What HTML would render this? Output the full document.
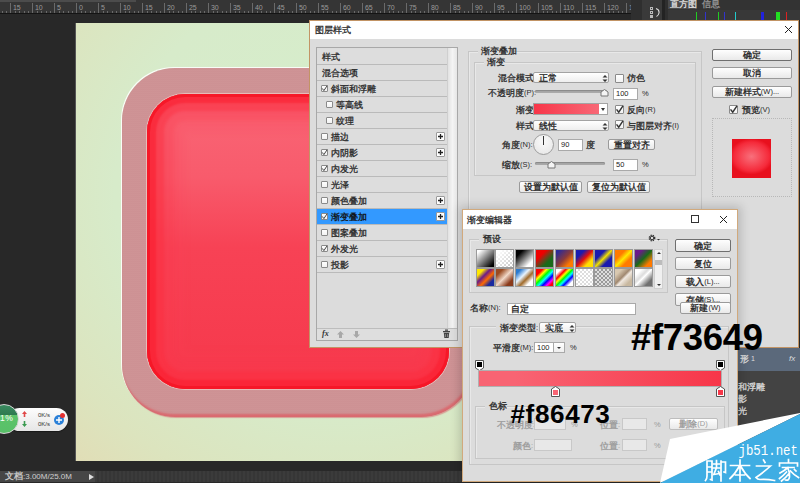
<!DOCTYPE html><html><head><meta charset="utf-8"><title>PS</title><style>
*{margin:0;padding:0;box-sizing:border-box}
html,body{width:800px;height:483px;overflow:hidden;background:#282828;font-family:"Liberation Sans",sans-serif;position:relative}
.a{position:absolute}
.t{position:absolute;font-size:7.5px;line-height:8px;color:#2a2a2a;white-space:nowrap}
.g{color:#9a9a9a}
.c{font-size:9.4px;line-height:8px;vertical-align:top;-webkit-text-stroke:0.3px currentColor}
.cb{position:absolute;width:7px;height:7px;background:linear-gradient(#fff,#f2f2f2);border:1px solid #8a8a8a;border-radius:1px}
.cb.s{width:6px;height:6px}
.ck{position:absolute;left:-1px;top:-1px;width:7px;height:7px}
.btn{position:absolute;border:1px solid #9a9a9a;border-radius:2px;background:linear-gradient(#fefefe,#e9e9e9);font-size:7.5px;line-height:8px;color:#222;white-space:nowrap;display:flex;align-items:center;justify-content:center}
.inp{position:absolute;background:#fff;border:1px solid #a9a9a9;font-size:7.5px;line-height:8px;color:#222;padding-left:2px;display:flex;align-items:center}
.dd{position:absolute;border:1px solid #a3a3a3;border-radius:2px;background:linear-gradient(#fff,#eeeeee);font-size:7.5px;line-height:8px;color:#222;padding-left:5px;display:flex;align-items:center}
.grp{position:absolute;border:1px solid #c6c6c6;box-shadow:inset 1px 1px 0 #e8e8e8}
.plus{position:absolute;width:9px;height:9px;border:1px solid #9a9a9a;background:#fff;border-radius:1px}
</style></head><body>
<div class="a" style="left:0;top:0;width:631px;height:14px;background:#353535;border-bottom:1px solid #141414"></div>
<div class="a" style="left:0;top:0;width:136px;height:2px;background:#4c4c4c"></div>
<div class="a" style="left:1.6px;top:11px;width:1px;height:2px;background:#6a6a6a"></div><div class="a" style="left:6.0px;top:11px;width:1px;height:2px;background:#6a6a6a"></div><div class="a" style="left:10.4px;top:3px;width:1px;height:10px;background:#6a6a6a"></div><div class="a" style="left:12.9px;top:4px;font-size:7px;line-height:8px;color:#9a9a9a">15</div><div class="a" style="left:14.8px;top:11px;width:1px;height:2px;background:#6a6a6a"></div><div class="a" style="left:19.2px;top:11px;width:1px;height:2px;background:#6a6a6a"></div><div class="a" style="left:23.6px;top:11px;width:1px;height:2px;background:#6a6a6a"></div><div class="a" style="left:28.0px;top:11px;width:1px;height:2px;background:#6a6a6a"></div><div class="a" style="left:32.4px;top:3px;width:1px;height:10px;background:#6a6a6a"></div><div class="a" style="left:34.9px;top:4px;font-size:7px;line-height:8px;color:#9a9a9a">10</div><div class="a" style="left:36.8px;top:11px;width:1px;height:2px;background:#6a6a6a"></div><div class="a" style="left:41.2px;top:11px;width:1px;height:2px;background:#6a6a6a"></div><div class="a" style="left:45.6px;top:11px;width:1px;height:2px;background:#6a6a6a"></div><div class="a" style="left:50.0px;top:11px;width:1px;height:2px;background:#6a6a6a"></div><div class="a" style="left:54.4px;top:3px;width:1px;height:10px;background:#6a6a6a"></div><div class="a" style="left:56.9px;top:4px;font-size:7px;line-height:8px;color:#9a9a9a">5</div><div class="a" style="left:58.8px;top:11px;width:1px;height:2px;background:#6a6a6a"></div><div class="a" style="left:63.2px;top:11px;width:1px;height:2px;background:#6a6a6a"></div><div class="a" style="left:67.6px;top:11px;width:1px;height:2px;background:#6a6a6a"></div><div class="a" style="left:72.0px;top:11px;width:1px;height:2px;background:#6a6a6a"></div><div class="a" style="left:76.4px;top:3px;width:1px;height:10px;background:#6a6a6a"></div><div class="a" style="left:78.9px;top:4px;font-size:7px;line-height:8px;color:#9a9a9a">0</div><div class="a" style="left:80.8px;top:11px;width:1px;height:2px;background:#6a6a6a"></div><div class="a" style="left:85.2px;top:11px;width:1px;height:2px;background:#6a6a6a"></div><div class="a" style="left:89.6px;top:11px;width:1px;height:2px;background:#6a6a6a"></div><div class="a" style="left:94.0px;top:11px;width:1px;height:2px;background:#6a6a6a"></div><div class="a" style="left:98.4px;top:3px;width:1px;height:10px;background:#6a6a6a"></div><div class="a" style="left:100.9px;top:4px;font-size:7px;line-height:8px;color:#9a9a9a">5</div><div class="a" style="left:102.8px;top:11px;width:1px;height:2px;background:#6a6a6a"></div><div class="a" style="left:107.2px;top:11px;width:1px;height:2px;background:#6a6a6a"></div><div class="a" style="left:111.6px;top:11px;width:1px;height:2px;background:#6a6a6a"></div><div class="a" style="left:116.0px;top:11px;width:1px;height:2px;background:#6a6a6a"></div><div class="a" style="left:120.4px;top:3px;width:1px;height:10px;background:#6a6a6a"></div><div class="a" style="left:122.9px;top:4px;font-size:7px;line-height:8px;color:#9a9a9a">10</div><div class="a" style="left:124.8px;top:11px;width:1px;height:2px;background:#6a6a6a"></div><div class="a" style="left:129.2px;top:11px;width:1px;height:2px;background:#6a6a6a"></div><div class="a" style="left:133.6px;top:11px;width:1px;height:2px;background:#6a6a6a"></div><div class="a" style="left:138.0px;top:11px;width:1px;height:2px;background:#6a6a6a"></div><div class="a" style="left:142.4px;top:3px;width:1px;height:10px;background:#6a6a6a"></div><div class="a" style="left:144.9px;top:4px;font-size:7px;line-height:8px;color:#9a9a9a">15</div><div class="a" style="left:146.8px;top:11px;width:1px;height:2px;background:#6a6a6a"></div><div class="a" style="left:151.2px;top:11px;width:1px;height:2px;background:#6a6a6a"></div><div class="a" style="left:155.6px;top:11px;width:1px;height:2px;background:#6a6a6a"></div><div class="a" style="left:160.0px;top:11px;width:1px;height:2px;background:#6a6a6a"></div><div class="a" style="left:164.4px;top:3px;width:1px;height:10px;background:#6a6a6a"></div><div class="a" style="left:166.9px;top:4px;font-size:7px;line-height:8px;color:#9a9a9a">20</div><div class="a" style="left:168.8px;top:11px;width:1px;height:2px;background:#6a6a6a"></div><div class="a" style="left:173.2px;top:11px;width:1px;height:2px;background:#6a6a6a"></div><div class="a" style="left:177.6px;top:11px;width:1px;height:2px;background:#6a6a6a"></div><div class="a" style="left:182.0px;top:11px;width:1px;height:2px;background:#6a6a6a"></div><div class="a" style="left:186.4px;top:3px;width:1px;height:10px;background:#6a6a6a"></div><div class="a" style="left:188.9px;top:4px;font-size:7px;line-height:8px;color:#9a9a9a">25</div><div class="a" style="left:190.8px;top:11px;width:1px;height:2px;background:#6a6a6a"></div><div class="a" style="left:195.2px;top:11px;width:1px;height:2px;background:#6a6a6a"></div><div class="a" style="left:199.6px;top:11px;width:1px;height:2px;background:#6a6a6a"></div><div class="a" style="left:204.0px;top:11px;width:1px;height:2px;background:#6a6a6a"></div><div class="a" style="left:208.4px;top:3px;width:1px;height:10px;background:#6a6a6a"></div><div class="a" style="left:210.9px;top:4px;font-size:7px;line-height:8px;color:#9a9a9a">30</div><div class="a" style="left:212.8px;top:11px;width:1px;height:2px;background:#6a6a6a"></div><div class="a" style="left:217.2px;top:11px;width:1px;height:2px;background:#6a6a6a"></div><div class="a" style="left:221.6px;top:11px;width:1px;height:2px;background:#6a6a6a"></div><div class="a" style="left:226.0px;top:11px;width:1px;height:2px;background:#6a6a6a"></div><div class="a" style="left:230.4px;top:3px;width:1px;height:10px;background:#6a6a6a"></div><div class="a" style="left:232.9px;top:4px;font-size:7px;line-height:8px;color:#9a9a9a">35</div><div class="a" style="left:234.8px;top:11px;width:1px;height:2px;background:#6a6a6a"></div><div class="a" style="left:239.2px;top:11px;width:1px;height:2px;background:#6a6a6a"></div><div class="a" style="left:243.6px;top:11px;width:1px;height:2px;background:#6a6a6a"></div><div class="a" style="left:248.0px;top:11px;width:1px;height:2px;background:#6a6a6a"></div><div class="a" style="left:252.4px;top:3px;width:1px;height:10px;background:#6a6a6a"></div><div class="a" style="left:254.9px;top:4px;font-size:7px;line-height:8px;color:#9a9a9a">40</div><div class="a" style="left:256.8px;top:11px;width:1px;height:2px;background:#6a6a6a"></div><div class="a" style="left:261.2px;top:11px;width:1px;height:2px;background:#6a6a6a"></div><div class="a" style="left:265.6px;top:11px;width:1px;height:2px;background:#6a6a6a"></div><div class="a" style="left:270.0px;top:11px;width:1px;height:2px;background:#6a6a6a"></div><div class="a" style="left:274.4px;top:3px;width:1px;height:10px;background:#6a6a6a"></div><div class="a" style="left:276.9px;top:4px;font-size:7px;line-height:8px;color:#9a9a9a">45</div><div class="a" style="left:278.8px;top:11px;width:1px;height:2px;background:#6a6a6a"></div><div class="a" style="left:283.2px;top:11px;width:1px;height:2px;background:#6a6a6a"></div><div class="a" style="left:287.6px;top:11px;width:1px;height:2px;background:#6a6a6a"></div><div class="a" style="left:292.0px;top:11px;width:1px;height:2px;background:#6a6a6a"></div><div class="a" style="left:296.4px;top:3px;width:1px;height:10px;background:#6a6a6a"></div><div class="a" style="left:298.9px;top:4px;font-size:7px;line-height:8px;color:#9a9a9a">50</div><div class="a" style="left:300.8px;top:11px;width:1px;height:2px;background:#6a6a6a"></div><div class="a" style="left:305.2px;top:11px;width:1px;height:2px;background:#6a6a6a"></div><div class="a" style="left:309.6px;top:11px;width:1px;height:2px;background:#6a6a6a"></div><div class="a" style="left:314.0px;top:11px;width:1px;height:2px;background:#6a6a6a"></div><div class="a" style="left:318.4px;top:3px;width:1px;height:10px;background:#6a6a6a"></div><div class="a" style="left:320.9px;top:4px;font-size:7px;line-height:8px;color:#9a9a9a">55</div><div class="a" style="left:322.8px;top:11px;width:1px;height:2px;background:#6a6a6a"></div><div class="a" style="left:327.2px;top:11px;width:1px;height:2px;background:#6a6a6a"></div><div class="a" style="left:331.6px;top:11px;width:1px;height:2px;background:#6a6a6a"></div><div class="a" style="left:336.0px;top:11px;width:1px;height:2px;background:#6a6a6a"></div><div class="a" style="left:340.4px;top:3px;width:1px;height:10px;background:#6a6a6a"></div><div class="a" style="left:342.9px;top:4px;font-size:7px;line-height:8px;color:#9a9a9a">60</div><div class="a" style="left:344.8px;top:11px;width:1px;height:2px;background:#6a6a6a"></div><div class="a" style="left:349.2px;top:11px;width:1px;height:2px;background:#6a6a6a"></div><div class="a" style="left:353.6px;top:11px;width:1px;height:2px;background:#6a6a6a"></div><div class="a" style="left:358.0px;top:11px;width:1px;height:2px;background:#6a6a6a"></div><div class="a" style="left:362.4px;top:3px;width:1px;height:10px;background:#6a6a6a"></div><div class="a" style="left:364.9px;top:4px;font-size:7px;line-height:8px;color:#9a9a9a">65</div><div class="a" style="left:366.8px;top:11px;width:1px;height:2px;background:#6a6a6a"></div><div class="a" style="left:371.2px;top:11px;width:1px;height:2px;background:#6a6a6a"></div><div class="a" style="left:375.6px;top:11px;width:1px;height:2px;background:#6a6a6a"></div><div class="a" style="left:380.0px;top:11px;width:1px;height:2px;background:#6a6a6a"></div><div class="a" style="left:384.4px;top:3px;width:1px;height:10px;background:#6a6a6a"></div><div class="a" style="left:386.9px;top:4px;font-size:7px;line-height:8px;color:#9a9a9a">70</div><div class="a" style="left:388.8px;top:11px;width:1px;height:2px;background:#6a6a6a"></div><div class="a" style="left:393.2px;top:11px;width:1px;height:2px;background:#6a6a6a"></div><div class="a" style="left:397.6px;top:11px;width:1px;height:2px;background:#6a6a6a"></div><div class="a" style="left:402.0px;top:11px;width:1px;height:2px;background:#6a6a6a"></div><div class="a" style="left:406.4px;top:3px;width:1px;height:10px;background:#6a6a6a"></div><div class="a" style="left:408.9px;top:4px;font-size:7px;line-height:8px;color:#9a9a9a">75</div><div class="a" style="left:410.8px;top:11px;width:1px;height:2px;background:#6a6a6a"></div><div class="a" style="left:415.2px;top:11px;width:1px;height:2px;background:#6a6a6a"></div><div class="a" style="left:419.6px;top:11px;width:1px;height:2px;background:#6a6a6a"></div><div class="a" style="left:424.0px;top:11px;width:1px;height:2px;background:#6a6a6a"></div><div class="a" style="left:428.4px;top:3px;width:1px;height:10px;background:#6a6a6a"></div><div class="a" style="left:430.9px;top:4px;font-size:7px;line-height:8px;color:#9a9a9a">80</div><div class="a" style="left:432.8px;top:11px;width:1px;height:2px;background:#6a6a6a"></div><div class="a" style="left:437.2px;top:11px;width:1px;height:2px;background:#6a6a6a"></div><div class="a" style="left:441.6px;top:11px;width:1px;height:2px;background:#6a6a6a"></div><div class="a" style="left:446.0px;top:11px;width:1px;height:2px;background:#6a6a6a"></div><div class="a" style="left:450.4px;top:3px;width:1px;height:10px;background:#6a6a6a"></div><div class="a" style="left:452.9px;top:4px;font-size:7px;line-height:8px;color:#9a9a9a">85</div><div class="a" style="left:454.8px;top:11px;width:1px;height:2px;background:#6a6a6a"></div><div class="a" style="left:459.2px;top:11px;width:1px;height:2px;background:#6a6a6a"></div><div class="a" style="left:463.6px;top:11px;width:1px;height:2px;background:#6a6a6a"></div><div class="a" style="left:468.0px;top:11px;width:1px;height:2px;background:#6a6a6a"></div><div class="a" style="left:472.4px;top:3px;width:1px;height:10px;background:#6a6a6a"></div><div class="a" style="left:474.9px;top:4px;font-size:7px;line-height:8px;color:#9a9a9a">90</div><div class="a" style="left:476.8px;top:11px;width:1px;height:2px;background:#6a6a6a"></div><div class="a" style="left:481.2px;top:11px;width:1px;height:2px;background:#6a6a6a"></div><div class="a" style="left:485.6px;top:11px;width:1px;height:2px;background:#6a6a6a"></div><div class="a" style="left:490.0px;top:11px;width:1px;height:2px;background:#6a6a6a"></div><div class="a" style="left:494.4px;top:3px;width:1px;height:10px;background:#6a6a6a"></div><div class="a" style="left:496.9px;top:4px;font-size:7px;line-height:8px;color:#9a9a9a">95</div><div class="a" style="left:498.8px;top:11px;width:1px;height:2px;background:#6a6a6a"></div><div class="a" style="left:503.2px;top:11px;width:1px;height:2px;background:#6a6a6a"></div><div class="a" style="left:507.6px;top:11px;width:1px;height:2px;background:#6a6a6a"></div><div class="a" style="left:512.0px;top:11px;width:1px;height:2px;background:#6a6a6a"></div><div class="a" style="left:516.4px;top:3px;width:1px;height:10px;background:#6a6a6a"></div><div class="a" style="left:518.9px;top:4px;font-size:7px;line-height:8px;color:#9a9a9a">100</div><div class="a" style="left:520.8px;top:11px;width:1px;height:2px;background:#6a6a6a"></div><div class="a" style="left:525.2px;top:11px;width:1px;height:2px;background:#6a6a6a"></div><div class="a" style="left:529.6px;top:11px;width:1px;height:2px;background:#6a6a6a"></div><div class="a" style="left:534.0px;top:11px;width:1px;height:2px;background:#6a6a6a"></div><div class="a" style="left:538.4px;top:3px;width:1px;height:10px;background:#6a6a6a"></div><div class="a" style="left:540.9px;top:4px;font-size:7px;line-height:8px;color:#9a9a9a">105</div><div class="a" style="left:542.8px;top:11px;width:1px;height:2px;background:#6a6a6a"></div><div class="a" style="left:547.2px;top:11px;width:1px;height:2px;background:#6a6a6a"></div><div class="a" style="left:551.6px;top:11px;width:1px;height:2px;background:#6a6a6a"></div><div class="a" style="left:556.0px;top:11px;width:1px;height:2px;background:#6a6a6a"></div><div class="a" style="left:560.4px;top:3px;width:1px;height:10px;background:#6a6a6a"></div><div class="a" style="left:562.9px;top:4px;font-size:7px;line-height:8px;color:#9a9a9a">110</div><div class="a" style="left:564.8px;top:11px;width:1px;height:2px;background:#6a6a6a"></div><div class="a" style="left:569.2px;top:11px;width:1px;height:2px;background:#6a6a6a"></div><div class="a" style="left:573.6px;top:11px;width:1px;height:2px;background:#6a6a6a"></div><div class="a" style="left:578.0px;top:11px;width:1px;height:2px;background:#6a6a6a"></div><div class="a" style="left:582.4px;top:3px;width:1px;height:10px;background:#6a6a6a"></div><div class="a" style="left:584.9px;top:4px;font-size:7px;line-height:8px;color:#9a9a9a">115</div><div class="a" style="left:586.8px;top:11px;width:1px;height:2px;background:#6a6a6a"></div><div class="a" style="left:591.2px;top:11px;width:1px;height:2px;background:#6a6a6a"></div><div class="a" style="left:595.6px;top:11px;width:1px;height:2px;background:#6a6a6a"></div><div class="a" style="left:600.0px;top:11px;width:1px;height:2px;background:#6a6a6a"></div><div class="a" style="left:604.4px;top:3px;width:1px;height:10px;background:#6a6a6a"></div><div class="a" style="left:606.9px;top:4px;font-size:7px;line-height:8px;color:#9a9a9a">120</div><div class="a" style="left:608.8px;top:11px;width:1px;height:2px;background:#6a6a6a"></div><div class="a" style="left:613.2px;top:11px;width:1px;height:2px;background:#6a6a6a"></div><div class="a" style="left:617.6px;top:11px;width:1px;height:2px;background:#6a6a6a"></div><div class="a" style="left:622.0px;top:11px;width:1px;height:2px;background:#6a6a6a"></div><div class="a" style="left:626.4px;top:3px;width:1px;height:10px;background:#6a6a6a"></div><div class="a" style="left:628.9px;top:4px;font-size:7px;line-height:8px;color:#9a9a9a">125</div>
<div class="a" style="left:76px;top:23px;width:600px;height:438px;background:radial-gradient(ellipse 420px 390px at 270px 170px,#d5eecc 0%,#d7ebca 55%,#dce4be 80%,#e3dbb3 100%);box-shadow:-1px 0 0 #555"></div>
<div class="a" style="left:122px;top:68px;width:352px;height:349px;border-radius:53px;background:repeating-linear-gradient(#ca8d8f 0px,#d39a9c 1px,#c8898c 2px);box-shadow:inset -1px -3px 2px 0 rgba(220,96,102,.8), 1px 1px 1px 0 rgba(215,110,115,.6), -1px -1px 0.5px 0 rgba(255,255,255,.85)"></div>
<div class="a" style="left:147px;top:94px;width:302px;height:295px;border-radius:38px;background:linear-gradient(#f96777 0%,#f85b6c 28%,#f74255 52%,#f6384b 100%);box-shadow:inset 0 0 0 3px rgba(245,22,38,.9), inset 0 0 2px 9px rgba(250,30,48,.62), inset 0 0 3px 17px rgba(252,42,60,.42), inset 0 0 4px 27px rgba(252,54,72,.26), inset 0 0 6px 38px rgba(252,64,82,.14), 0 0 0 1px rgba(255,230,220,.5)"></div>
<div class="a" style="left:0;top:471px;width:95px;height:11px;background:#464646"></div>
<div class="a" style="left:95px;top:471px;width:705px;height:11px;background:repeating-linear-gradient(90deg,#3b3b3b 0 2px,#363636 2px 4px)"></div>
<div class="a" style="left:5px;top:472px;font-size:8px;line-height:10px;color:#cfcfcf;white-space:nowrap"><span class="c">文档</span>:3.00M/25.0M</div>
<div class="a" style="left:89px;top:474px;width:0;height:0;border-left:5px solid #ddd;border-top:3.5px solid transparent;border-bottom:3.5px solid transparent"></div>
<div class="a" style="left:8px;top:408px;width:60px;height:23px;border-radius:12px;background:linear-gradient(#fdfdfd,#e6e6e6);box-shadow:0 1px 1px rgba(0,0,0,.4)"></div>
<div class="a" style="left:-11px;top:404px;width:30px;height:30px;border-radius:50%;background:linear-gradient(#3a8a60 0%,#2f7a50 34%,#5cc46a 35%,#58c068 100%);border:1.5px solid #d8d8d8"></div>
<div class="a" style="left:0px;top:414px;font-size:8.5px;line-height:9px;color:#fff;letter-spacing:0.5px">1%</div>
<div class="a" style="left:38px;top:411.5px;font-size:6px;line-height:7px;color:#333">0K/s</div>
<div class="a" style="left:38px;top:420.5px;font-size:6px;line-height:7px;color:#333">0K/s</div>
<svg class="a" style="left:22px;top:411px" width="5" height="6"><path d="M2.5 0L5 3H3.3V6H1.7V3H0Z" fill="#e04848"/></svg>
<svg class="a" style="left:22px;top:421px" width="5" height="6"><path d="M2.5 6L5 3H3.3V0H1.7V3H0Z" fill="#3a9a50"/></svg>
<div class="a" style="left:53.5px;top:414.5px;width:10.5px;height:10.5px;border-radius:50%;background:#2a80d8"></div>
<svg class="a" style="left:55px;top:416px" width="8" height="8"><path d="M4 1V7M1 4H7" stroke="#fff" stroke-width="1.4"/></svg>
<div class="a" style="left:60px;top:413px;width:5px;height:5px;border-radius:50%;background:#e43030"></div>
<div class="a" style="left:631px;top:0;width:169px;height:20px;background:#2f2f2f"></div>
<div class="a" style="left:642px;top:0;width:23px;height:20px;background:#3a3a3a;border-right:3px solid #232323"></div>
<div class="a" style="left:650px;top:7px;width:3px;height:3px;border:1px solid #bbb"></div>
<div class="a" style="left:650px;top:11px;width:3px;height:3px;border:1px solid #bbb"></div>
<div class="a" style="left:650px;top:15px;width:3px;height:3px;background:#bbb"></div>
<svg class="a" style="left:655px;top:7px" width="5" height="10"><path d="M1 1.5 Q4.5 2.5 4 6 Q3.5 8.5 1.5 9.5" fill="none" stroke="#ddd" stroke-width="1.1"/></svg>
<div class="a" style="left:668px;top:0;width:132px;height:10px;background:#333"></div>
<div class="a" style="left:668px;top:0;width:29px;height:9px;background:#4a4a4a"></div>
<div class="a" style="left:670px;top:0px;font-size:7px;line-height:8px;color:#ddd"><span class="c">直方图</span></div>
<div class="a" style="left:702px;top:0px;font-size:7px;line-height:8px;color:#999"><span class="c">信息</span></div>
<div class="a" style="left:668px;top:10px;width:132px;height:10px;background:#383838"></div>
<div class="a" style="left:696px;top:12px;width:1px;height:8px;background:#2c2"></div>
<div class="a" style="left:705px;top:12px;width:1px;height:8px;background:#33c"></div>
<div class="a" style="left:718px;top:12px;width:1px;height:8px;background:#2c2"></div>
<div class="a" style="left:724px;top:12px;width:1px;height:8px;background:#33c"></div>
<div class="a" style="left:735px;top:12px;width:1px;height:8px;background:#2cc"></div>
<div class="a" style="left:761px;top:12px;width:3px;height:8px;background:#22d"></div>
<div class="a" style="left:776px;top:12px;width:4px;height:8px;background:#2d2"></div>
<div class="a" style="left:786px;top:12px;width:1px;height:8px;background:#d22"></div>
<div class="a" style="left:738px;top:348px;width:62px;height:135px;background:#434343"></div>
<div class="a" style="left:738px;top:348px;width:62px;height:23px;background:#5b697b"></div>
<div class="a" style="left:740px;top:355px;font-size:7px;color:#dcdcdc"><span class="c">形</span> 1</div>
<div class="a" style="left:789px;top:354px;font-size:8px;font-style:italic;color:#ddd">fx</div>
<div class="a" style="left:738px;top:383px;font-size:7px;line-height:12px;color:#ddd"><span class="c">和浮雕</span><br><span class="c">影</span><br><span class="c">光</span></div>
<div class="a" style="left:309px;top:20px;width:490px;height:328px;background:#dcdcdc;border:1px solid #c29465"></div>
<div class="a" style="left:310px;top:21px;width:488px;height:18px;background:#fff"></div>
<div class="t " style="left:315px;top:26px;"><span class="c">图层样式</span></div>
<svg class="a" style="left:784px;top:25px" width="9" height="9"><path d="M1 1L8 8M8 1L1 8" stroke="#222" stroke-width="1"/></svg>
<div class="a" style="left:316px;top:47px;width:142px;height:294px;border:1px solid #a8a8a8;background:#dcdcdc"></div>
<div class="a" style="left:447px;top:48px;width:10px;height:280px;background:linear-gradient(90deg,#e2e2e2,#f4f4f4 50%,#e6e6e6);border-left:1px solid #cfcfcf"></div>
<div class="a" style="left:317px;top:49px;width:130px;height:16px;background:#dddddd;border-bottom:1px solid #bababa"></div>
<div class="t " style="left:322px;top:53px;"><span class="c">样式</span></div>
<div class="a" style="left:317px;top:65px;width:130px;height:16px;background:#dddddd;border-bottom:1px solid #bababa"></div>
<div class="t " style="left:322px;top:69px;"><span class="c">混合选项</span></div>
<div class="a" style="left:317px;top:81px;width:130px;height:16px;background:#dddddd;border-bottom:1px solid #bababa"></div>
<div class="cb" style="left:321px;top:85px;width:7px;height:7px"><svg class="ck" style="width:7px;height:7px" viewBox="0 0 7 7"><path d="M1.2 3.4 L2.9 5.6 L6.2 0.6" fill="none" stroke="#333" stroke-width="0.9"/></svg></div>
<div class="t " style="left:331px;top:85px;"><span class="c">斜面和浮雕</span></div>
<div class="a" style="left:317px;top:97px;width:130px;height:16px;background:#dddddd;border-bottom:1px solid #bababa"></div>
<div class="cb" style="left:326px;top:101px;width:7px;height:7px"></div>
<div class="t " style="left:336px;top:101px;"><span class="c">等高线</span></div>
<div class="a" style="left:317px;top:113px;width:130px;height:16px;background:#dddddd;border-bottom:1px solid #bababa"></div>
<div class="cb" style="left:326px;top:117px;width:7px;height:7px"></div>
<div class="t " style="left:336px;top:117px;"><span class="c">纹理</span></div>
<div class="a" style="left:317px;top:129px;width:130px;height:16px;background:#dddddd;border-bottom:1px solid #bababa"></div>
<div class="cb" style="left:321px;top:133px;width:7px;height:7px"></div>
<div class="t " style="left:331px;top:133px;"><span class="c">描边</span></div>
<div class="plus" style="left:436px;top:132px"><svg width="7" height="7" style="position:absolute;left:0;top:0"><path d="M3.5 1v5M1 3.5h5" stroke="#222" stroke-width="1.3"/></svg></div>
<div class="a" style="left:317px;top:145px;width:130px;height:16px;background:#dddddd;border-bottom:1px solid #bababa"></div>
<div class="cb" style="left:321px;top:149px;width:7px;height:7px"><svg class="ck" style="width:7px;height:7px" viewBox="0 0 7 7"><path d="M1.2 3.4 L2.9 5.6 L6.2 0.6" fill="none" stroke="#333" stroke-width="0.9"/></svg></div>
<div class="t " style="left:331px;top:149px;"><span class="c">内阴影</span></div>
<div class="plus" style="left:436px;top:148px"><svg width="7" height="7" style="position:absolute;left:0;top:0"><path d="M3.5 1v5M1 3.5h5" stroke="#222" stroke-width="1.3"/></svg></div>
<div class="a" style="left:317px;top:161px;width:130px;height:16px;background:#dddddd;border-bottom:1px solid #bababa"></div>
<div class="cb" style="left:321px;top:165px;width:7px;height:7px"><svg class="ck" style="width:7px;height:7px" viewBox="0 0 7 7"><path d="M1.2 3.4 L2.9 5.6 L6.2 0.6" fill="none" stroke="#333" stroke-width="0.9"/></svg></div>
<div class="t " style="left:331px;top:165px;"><span class="c">内发光</span></div>
<div class="a" style="left:317px;top:177px;width:130px;height:16px;background:#dddddd;border-bottom:1px solid #bababa"></div>
<div class="cb" style="left:321px;top:181px;width:7px;height:7px"></div>
<div class="t " style="left:331px;top:181px;"><span class="c">光泽</span></div>
<div class="a" style="left:317px;top:193px;width:130px;height:16px;background:#dddddd;border-bottom:1px solid #bababa"></div>
<div class="cb" style="left:321px;top:197px;width:7px;height:7px"></div>
<div class="t " style="left:331px;top:197px;"><span class="c">颜色叠加</span></div>
<div class="plus" style="left:436px;top:196px"><svg width="7" height="7" style="position:absolute;left:0;top:0"><path d="M3.5 1v5M1 3.5h5" stroke="#222" stroke-width="1.3"/></svg></div>
<div class="a" style="left:317px;top:209px;width:130px;height:16px;background:#3399ff;border-bottom:1px solid #bababa"></div>
<div class="cb" style="left:321px;top:213px;width:7px;height:7px"><svg class="ck" style="width:7px;height:7px" viewBox="0 0 7 7"><path d="M1.2 3.4 L2.9 5.6 L6.2 0.6" fill="none" stroke="#333" stroke-width="0.9"/></svg></div>
<div class="t " style="left:331px;top:213px;color:#111"><span class="c">渐变叠加</span></div>
<div class="plus" style="left:436px;top:212px"><svg width="7" height="7" style="position:absolute;left:0;top:0"><path d="M3.5 1v5M1 3.5h5" stroke="#222" stroke-width="1.3"/></svg></div>
<div class="a" style="left:317px;top:225px;width:130px;height:16px;background:#dddddd;border-bottom:1px solid #bababa"></div>
<div class="cb" style="left:321px;top:229px;width:7px;height:7px"></div>
<div class="t " style="left:331px;top:229px;"><span class="c">图案叠加</span></div>
<div class="a" style="left:317px;top:241px;width:130px;height:16px;background:#dddddd;border-bottom:1px solid #bababa"></div>
<div class="cb" style="left:321px;top:245px;width:7px;height:7px"><svg class="ck" style="width:7px;height:7px" viewBox="0 0 7 7"><path d="M1.2 3.4 L2.9 5.6 L6.2 0.6" fill="none" stroke="#333" stroke-width="0.9"/></svg></div>
<div class="t " style="left:331px;top:245px;"><span class="c">外发光</span></div>
<div class="a" style="left:317px;top:257px;width:130px;height:16px;background:#dddddd;border-bottom:1px solid #bababa"></div>
<div class="cb" style="left:321px;top:261px;width:7px;height:7px"></div>
<div class="t " style="left:331px;top:261px;"><span class="c">投影</span></div>
<div class="plus" style="left:436px;top:260px"><svg width="7" height="7" style="position:absolute;left:0;top:0"><path d="M3.5 1v5M1 3.5h5" stroke="#222" stroke-width="1.3"/></svg></div>
<div class="a" style="left:317px;top:328px;width:140px;height:12px;border-top:1px solid #bdbdbd;background:#dedede"></div>
<div class="a" style="left:322px;top:329px;font-size:8px;font-style:italic;font-weight:bold;color:#333;font-family:'Liberation Serif'">fx</div>
<svg class="a" style="left:336px;top:330px" width="9" height="9"><path d="M4.5 1L8 4.5H6V8H3V4.5H1Z" fill="#a8a8a8"/></svg>
<svg class="a" style="left:352px;top:330px" width="9" height="9"><path d="M4.5 8L8 4.5H6V1H3V4.5H1Z" fill="#a8a8a8"/></svg>
<svg class="a" style="left:442px;top:329px" width="9" height="10"><path d="M3 1.2H6M1 2.6H8" stroke="#444" stroke-width="1.2"/><path d="M1.8 3.8H7.2L6.7 9H2.3Z" fill="#444"/><path d="M3.4 5V8M5.6 5V8" stroke="#bbb" stroke-width="0.6"/></svg>
<div class="grp" style="left:468px;top:51px;width:234px;height:170px"></div>
<div class="a" style="left:478px;top:46px;width:36px;height:9px;background:#dcdcdc"></div>
<div class="t " style="left:481px;top:47px;"><span class="c">渐变叠加</span></div>
<div class="grp" style="left:474px;top:62px;width:222px;height:114px"></div>
<div class="a" style="left:484px;top:57px;width:20px;height:9px;background:#dcdcdc"></div>
<div class="t " style="left:487px;top:58px;"><span class="c">渐变</span></div>
<div class="t " style="left:498px;top:74px;"><span class="c">混合模式</span>:</div>
<div class="dd" style="left:533px;top:72px;width:76px;height:11px"><span class="c">正常</span></div>
<svg class="a" style="left:602px;top:74px" width="6" height="9"><path d="M0.5 3.5L3 1L5.5 3.5ZM0.5 5.5L3 8L5.5 5.5Z" fill="#333"/></svg>
<div class="cb" style="left:615px;top:73.5px;width:9px;height:9px"></div>
<div class="t " style="left:627px;top:74px;"><span class="c">仿色</span></div>
<div class="t " style="left:488px;top:89px;"><span class="c">不透明度</span>(P):</div>
<div class="a" style="left:535px;top:90px;width:72px;height:3px;border-radius:2px;background:#a9a9a9;box-shadow:inset 0 1px 1px #888"></div>
<svg class="a" style="left:600px;top:89px" width="9" height="8"><path d="M1 3 L4.5 0.5 L8 3 V7 H1 Z" fill="#f4f4f4" stroke="#777"/></svg>
<div class="inp" style="left:613px;top:88px;width:25px;height:12px;">100</div>
<div class="t " style="left:642px;top:90px;">%</div>
<div class="t " style="left:516px;top:106px;"><span class="c">渐变</span>:</div>
<div class="a" style="left:533px;top:103px;width:75px;height:12px;border:1px solid #a3a3a3;background:#fff"></div>
<div class="a" style="left:534px;top:104px;width:65px;height:10px;background:linear-gradient(90deg,#f73649,#f86876)"></div>
<div class="a" style="left:601px;top:108px;width:0;height:0;border-top:3px solid #333;border-left:2.5px solid transparent;border-right:2.5px solid transparent"></div>
<div class="cb" style="left:615px;top:104.5px;width:9px;height:9px"><svg class="ck" style="width:9px;height:9px" viewBox="0 0 7 7"><path d="M1.2 3.4 L2.9 5.6 L6.2 0.6" fill="none" stroke="#333" stroke-width="1.1"/></svg></div>
<div class="t " style="left:627px;top:106px;"><span class="c">反向</span>(R)</div>
<div class="t " style="left:516px;top:122px;"><span class="c">样式</span>:</div>
<div class="dd" style="left:533px;top:120px;width:76px;height:11px"><span class="c">线性</span></div>
<svg class="a" style="left:602px;top:122px" width="6" height="9"><path d="M0.5 3.5L3 1L5.5 3.5ZM0.5 5.5L3 8L5.5 5.5Z" fill="#333"/></svg>
<div class="cb" style="left:615px;top:120px;width:9px;height:9px"><svg class="ck" style="width:9px;height:9px" viewBox="0 0 7 7"><path d="M1.2 3.4 L2.9 5.6 L6.2 0.6" fill="none" stroke="#333" stroke-width="1.1"/></svg></div>
<div class="t " style="left:627px;top:122px;"><span class="c">与图层对齐</span>(I)</div>
<div class="t " style="left:502px;top:141px;"><span class="c">角度</span>(N):</div>
<div class="a" style="left:533px;top:134px;width:21px;height:21px;border-radius:50%;border:1px solid #9d9d9d;background:radial-gradient(circle at 50% 35%,#fafafa,#e4e4e4)"></div>
<div class="a" style="left:543px;top:136px;width:1px;height:9px;background:#333"></div>
<div class="inp" style="left:558px;top:139px;width:25px;height:12px;">90</div>
<div class="t " style="left:586px;top:141px;"><span class="c">度</span></div>
<div class="btn" style="left:608px;top:139px;width:47px;height:11px"><span class="c">重置对齐</span></div>
<div class="t " style="left:502px;top:161px;"><span class="c">缩放</span>(S):</div>
<div class="a" style="left:535px;top:162px;width:70px;height:3px;border-radius:2px;background:#a9a9a9;box-shadow:inset 0 1px 1px #888"></div>
<svg class="a" style="left:547px;top:161px" width="9" height="8"><path d="M1 3 L4.5 0.5 L8 3 V7 H1 Z" fill="#f4f4f4" stroke="#777"/></svg>
<div class="inp" style="left:613px;top:159px;width:25px;height:12px;">50</div>
<div class="t " style="left:642px;top:161px;">%</div>
<div class="btn" style="left:519px;top:181px;width:63px;height:12px"><span class="c">设置为默认值</span></div>
<div class="btn" style="left:587px;top:181px;width:63px;height:12px"><span class="c">复位为默认值</span></div>
<div class="btn" style="left:712px;top:49px;width:80px;height:12px;border-color:#6f6f6f"><span class="c">确定</span></div>
<div class="btn" style="left:712px;top:67px;width:80px;height:12px"><span class="c">取消</span></div>
<div class="btn" style="left:712px;top:86px;width:80px;height:12px"><span class="c">新建样式</span>(W)...</div>
<div class="cb" style="left:729px;top:104.5px;width:9px;height:9px"><svg class="ck" style="width:9px;height:9px" viewBox="0 0 7 7"><path d="M1.2 3.4 L2.9 5.6 L6.2 0.6" fill="none" stroke="#333" stroke-width="1.1"/></svg></div>
<div class="t " style="left:742px;top:106px;"><span class="c">预览</span>(V)</div>
<div class="a" style="left:712px;top:118px;width:80px;height:79px;border:1px dotted #b8b8b8;background:#dcdcdc"></div>
<div class="a" style="left:732px;top:139px;width:39px;height:39px;background:radial-gradient(ellipse 22px 18px at 50% 45%,#f8707c,#f52a3a 80%,#e8101e)"></div>
<div class="a" style="left:452px;top:200px;width:296px;height:290px;background:radial-gradient(rgba(0,0,0,0),rgba(0,0,0,0));box-shadow:none"></div>
<div class="a" style="left:462px;top:209px;width:276px;height:273px;background:#dcdcdc;border:1px solid #d1a97c;box-shadow:0 0 9px 3px rgba(0,0,0,.16)"></div>
<div class="a" style="left:463px;top:210px;width:274px;height:18.5px;background:#fff"></div>
<div class="t " style="left:467px;top:216px;"><span class="c">渐变编辑器</span></div>
<div class="a" style="left:691px;top:215px;width:8px;height:8px;border:1px solid #333"></div>
<svg class="a" style="left:719px;top:215px" width="9" height="9"><path d="M1 1L8 8M8 1L1 8" stroke="#222" stroke-width="1"/></svg>
<div class="grp" style="left:469px;top:239px;width:199px;height:54px"></div>
<div class="a" style="left:479px;top:234px;width:22px;height:9px;background:#dcdcdc"></div>
<div class="t " style="left:483px;top:235px;"><span class="c">预设</span></div>
<svg class="a" style="left:648px;top:234px" width="12" height="8"><circle cx="4" cy="4" r="2.6" fill="none" stroke="#333" stroke-width="1.6" stroke-dasharray="1.2 0.9"/><circle cx="4" cy="4" r="1.8" fill="none" stroke="#333" stroke-width="1"/><path d="M9 5L10.5 6.5L12 5Z" fill="#333"/></svg>
<div class="a" style="left:475.5px;top:249px;width:19px;height:19px;background:linear-gradient(135deg,#fff 10%,#000 90%);border:1px solid #9a9a9a"></div>
<div class="a" style="left:495.3px;top:249px;width:19px;height:19px;background:linear-gradient(135deg,#fff 10%,rgba(255,255,255,0) 90%),repeating-conic-gradient(#ccc 0 25%,#fff 0 50%) 0 0/4px 4px;border:1px solid #9a9a9a"></div>
<div class="a" style="left:515.1px;top:249px;width:19px;height:19px;background:linear-gradient(135deg,#000 20%,#fff 80%);border:1px solid #9a9a9a"></div>
<div class="a" style="left:534.9px;top:249px;width:19px;height:19px;background:linear-gradient(135deg,#e00 30%,#7a3a1a 50%,#1a6a1a 70%);border:1px solid #9a9a9a"></div>
<div class="a" style="left:554.7px;top:249px;width:19px;height:19px;background:linear-gradient(135deg,#2a2a9a 10%,#8a3a3a 50%,#ff7a00 80%);border:1px solid #9a9a9a"></div>
<div class="a" style="left:574.5px;top:249px;width:19px;height:19px;background:linear-gradient(135deg,#1a1ab0 25%,#e01010 50%,#ffe000 75%);border:1px solid #9a9a9a"></div>
<div class="a" style="left:594.3px;top:249px;width:19px;height:19px;background:linear-gradient(135deg,#1a1ab0 30%,#f0e000 50%,#1a1ab0 70%);border:1px solid #9a9a9a"></div>
<div class="a" style="left:614.1px;top:249px;width:19px;height:19px;background:linear-gradient(135deg,#ff7a00 30%,#ffe800 50%,#ff7a00 70%);border:1px solid #9a9a9a"></div>
<div class="a" style="left:633.9px;top:249px;width:19px;height:19px;background:linear-gradient(135deg,#6a1a8a 20%,#1a6a1a 50%,#ff7a00 80%);border:1px solid #9a9a9a"></div>
<div class="a" style="left:475.5px;top:268px;width:19px;height:19px;background:linear-gradient(135deg,#ffe800 20%,#6a1a8a 40%,#ff6a00 60%,#1a2aa0 80%);border:1px solid #9a9a9a"></div>
<div class="a" style="left:495.3px;top:268px;width:19px;height:19px;background:linear-gradient(135deg,#9a4a20 20%,#f0d8c8 50%,#8a3a1a 80%);border:1px solid #9a9a9a"></div>
<div class="a" style="left:515.1px;top:268px;width:19px;height:19px;background:linear-gradient(135deg,#2a7ad0 15%,#e8f4ff 40%,#a06a2a 60%,#fff 80%);border:1px solid #9a9a9a"></div>
<div class="a" style="left:534.9px;top:268px;width:19px;height:19px;background:linear-gradient(135deg,#f00 20%,#ff0 32%,#0f0 44%,#0ff 56%,#00f 68%,#f0f 80%,#f00 90%);border:1px solid #9a9a9a"></div>
<div class="a" style="left:554.7px;top:268px;width:19px;height:19px;background:linear-gradient(135deg,#fff 15%,#f00 30%,#ff0 40%,#0f0 50%,#0ff 60%,#00f 70%,#fff 85%);border:1px solid #9a9a9a"></div>
<div class="a" style="left:574.5px;top:268px;width:19px;height:19px;background:repeating-conic-gradient(#ddd 0 25%,#fff 0 50%) 0 0/4px 4px;border:1px solid #9a9a9a"></div>
<div class="a" style="left:594.3px;top:268px;width:19px;height:19px;background:repeating-conic-gradient(#999 0 25%,#ddd 0 50%) 0 0/4px 4px;border:1px solid #9a9a9a"></div>
<div class="a" style="left:614.1px;top:268px;width:19px;height:19px;background:linear-gradient(135deg,#d8c8b0 20%,#a08870 45%,#f0e8e0 55%,#c8b8a0 80%);border:1px solid #9a9a9a"></div>
<div class="a" style="left:633.9px;top:268px;width:19px;height:19px;background:linear-gradient(135deg,#fff 20%,#dcdcdc 40%,#fff 50%,#707070 80%);border:1px solid #9a9a9a"></div>
<div class="a" style="left:654px;top:249px;width:9px;height:40px;background:#f0f0f0;border:1px solid #d0d0d0"></div>
<div class="a" style="left:655px;top:260px;width:7px;height:5px;background:#bcbcbc"></div>
<div class="a" style="left:657px;top:252px;width:0;height:0;border-bottom:2.5px solid #333;border-left:2px solid transparent;border-right:2px solid transparent"></div>
<div class="a" style="left:657px;top:284px;width:0;height:0;border-top:2.5px solid #333;border-left:2px solid transparent;border-right:2px solid transparent"></div>
<div class="btn" style="left:675px;top:239px;width:56px;height:13px;border-color:#6f6f6f"><span class="c">确定</span></div>
<div class="btn" style="left:675px;top:257px;width:56px;height:13px"><span class="c">复位</span></div>
<div class="btn" style="left:675px;top:275px;width:56px;height:13px"><span class="c">载入</span>(L)...</div>
<div class="btn" style="left:675px;top:293px;width:56px;height:13px"><span class="c">存储</span>(S)...</div>
<div class="btn" style="left:680px;top:302px;width:51px;height:12px"><span class="c">新建</span>(W)</div>
<div class="t " style="left:470px;top:304px;"><span class="c">名称</span>(N):</div>
<div class="inp" style="left:507px;top:303px;width:129px;height:12px;padding-left:3px;"><span class="c">自定</span></div>
<div class="grp" style="left:469px;top:326px;width:260px;height:139px"></div>
<div class="a" style="left:496px;top:322px;width:78px;height:12px;background:#dcdcdc"></div>
<div class="t " style="left:500px;top:324px;"><span class="c">渐变类型</span>:</div>
<div class="dd" style="left:539px;top:322px;width:37px;height:11px"><span class="c">实底</span></div>
<svg class="a" style="left:569px;top:324px" width="6" height="9"><path d="M0.5 3.5L3 1L5.5 3.5ZM0.5 5.5L3 8L5.5 5.5Z" fill="#333"/></svg>
<div class="t " style="left:493px;top:344px;"><span class="c">平滑度</span>(M):</div>
<div class="inp" style="left:534px;top:342px;width:20px;height:11px;">100</div>
<div class="a" style="left:553px;top:342px;width:12px;height:11px;border:1px solid #a9a9a9;background:linear-gradient(#fff,#eee)"></div>
<div class="a" style="left:557px;top:347px;width:0;height:0;border-top:2.5px solid #333;border-left:2px solid transparent;border-right:2px solid transparent"></div>
<div class="t " style="left:570px;top:344px;">%</div>
<svg class="a" style="left:475px;top:360px" width="9" height="11"><path d="M0.5 0.5 H8.5 V8 L4.5 10.5 L0.5 8 Z" fill="#fff" stroke="#555"/><rect x="2" y="2" width="5" height="5" fill="#000"/></svg>
<svg class="a" style="left:716px;top:360px" width="9" height="11"><path d="M0.5 0.5 H8.5 V8 L4.5 10.5 L0.5 8 Z" fill="#fff" stroke="#555"/><rect x="2" y="2" width="5" height="5" fill="#000"/></svg>
<div class="a" style="left:478px;top:370px;width:244px;height:17px;background:linear-gradient(90deg,#f86473,#f86473 15%,#f73649);border:1px solid #b0b0b0"></div>
<svg class="a" style="left:551px;top:386px" width="9" height="11"><path d="M0.5 10.5 H8.5 V3 L4.5 0.5 L0.5 3 Z" fill="#fff" stroke="#555"/><rect x="2" y="4" width="5" height="5" fill="#f86473"/></svg>
<svg class="a" style="left:716px;top:386px" width="9" height="11"><path d="M0.5 10.5 H8.5 V3 L4.5 0.5 L0.5 3 Z" fill="#fff" stroke="#555"/><rect x="2" y="4" width="5" height="5" fill="#f73649"/></svg>
<div class="grp" style="left:475px;top:406px;width:250px;height:53px"></div>
<div class="a" style="left:485px;top:401px;width:22px;height:9px;background:#dcdcdc"></div>
<div class="t " style="left:489px;top:402px;"><span class="c">色标</span></div>
<div class="t g" style="left:497px;top:421px;"><span class="c">不透明度</span>:</div>
<div class="a" style="left:534px;top:418px;width:32px;height:12px;border:1px solid #c8c8c8;background:#e8e8e8"></div>
<div class="t g" style="left:571px;top:421px;">%</div>
<div class="t g" style="left:600px;top:421px;"><span class="c">位置</span>:</div>
<div class="a" style="left:622px;top:418px;width:25px;height:12px;border:1px solid #c8c8c8;background:#e8e8e8"></div>
<div class="t g" style="left:654px;top:421px;">%</div>
<div class="btn" style="left:669px;top:418px;width:49px;height:12px;color:#9a9a9a;border-color:#bdbdbd"><span class="c">删除</span>(D)</div>
<div class="t g" style="left:513px;top:442px;"><span class="c">颜色</span>:</div>
<div class="a" style="left:534px;top:439px;width:38px;height:12px;border:1px solid #c8c8c8;background:#e8e8e8"></div>
<div class="t g" style="left:600px;top:442px;"><span class="c">位置</span>:</div>
<div class="a" style="left:622px;top:439px;width:25px;height:12px;border:1px solid #c8c8c8;background:#e8e8e8"></div>
<div class="t g" style="left:654px;top:442px;">%</div>
<div class="a" style="left:631px;top:318px;font:bold 36.5px/40px 'Liberation Sans';letter-spacing:-0.3px;color:#000;white-space:nowrap">#f73649</div>
<div class="a" style="left:510.5px;top:398.5px;font:bold 26.1px/30px 'Liberation Sans';letter-spacing:0.6px;color:#000;white-space:nowrap">#f86473</div>
<svg class="a" style="left:0;top:0" width="800" height="483"><polygon points="670,439 800,413 800,414 660,483" fill="#fff"/><polygon points="660,483 800,414 800,483" fill="#3fade3"/></svg>
<div class="a" style="left:738.5px;top:443px;font:12.4px/14px 'Liberation Mono';color:#fff;white-space:nowrap;transform:scaleY(1.15);transform-origin:0 0">jb51.net</div>
<svg class="a" style="left:704px;top:458px" width="96" height="25" viewBox="0 0 96 25"><g fill="none" stroke="#fff" stroke-width="1.7" stroke-linecap="square"><path d="M3 3V18Q3 21 1.5 22.5M3 3H8V22L6.5 21.5M3 9H8M3 14H8"/><path d="M9.5 6H15.5M12.5 2.5V10M9 10H16M12 11L9.8 16.5L15.5 15.5M14.5 13.5L16 17"/><path d="M17 4H21.5V14.5L20 14M17 3V23"/><path d="M26.5 7.5H45.5M36 2V23M35.5 8Q31 16 26 20.5M36.5 8Q41 16 46 20.5M31.5 17H40.5"/><path d="M59.5 2L61 4.5M52.5 8H66.5Q60 14 52 19.5Q53.5 21.5 56 21.5Q63 21 70.5 22.5"/><path d="M84.5 1.5V4.5M75.5 8V5H93.5V8M78.5 9.5H90M84 9.5Q80 13 76 15M84 10.5Q86 15 85.5 19Q85 23 81.5 22M82.5 14Q79 18 75.5 20.5M85.5 15Q82 19.5 77.5 23M86.5 13Q90 17 94.5 19.5M90.5 11.5L92 13"/></g></svg>
</body></html>
